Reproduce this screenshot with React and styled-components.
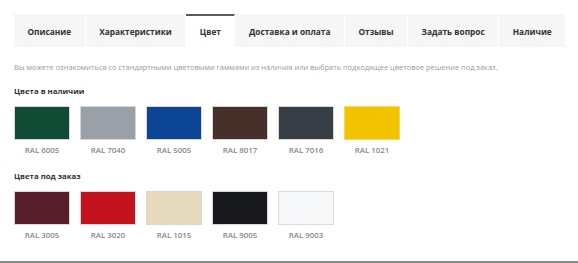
import React, {useState} from "react";
import styled, {createGlobalStyle} from "styled-components";

const GlobalStyle = createGlobalStyle`
    body {
        margin: 0;
        background: #fff;
        font-family: "Open Sans", "Liberation Sans", sans-serif;
    }
`;

const Page = styled.div`
    width: 578px;
    height: 263px;
    box-sizing: border-box;
    padding: 14px 11px 0 14px;
    border-bottom: 2px solid #8a8a8a;
    overflow: hidden;
`;

const TabBar = styled.div`
    display: flex;
    height: 32px;
    border-bottom: 1px solid #f0f0f0;
`;

const Tab = styled.div`
    display: flex;
    align-items: center;
    padding: 0 13.5px;
    font-size: 8.3px;
    font-weight: 700;
    color: #333;
    background: ${p => (p.$active ? "#fff" : "#f6f6f6")};
    border-top: 2px solid ${p => (p.$active ? "#5a5a5a" : "#f6f6f6")};
    border-right: 1px solid #fff;
    margin-bottom: -1px;
    box-sizing: border-box;
    white-space: nowrap;
    cursor: pointer;
`;

const Intro = styled.p`
    margin: 15px 0 0;
    font-size: 7.45px;
    color: #9a9a9a;
`;

const GroupTitle = styled.div`
    margin-top: ${p => p.$top}px;
    font-size: 7.8px;
    font-weight: 700;
    color: #333;
`;

const SwatchRow = styled.div`
    display: flex;
    gap: 10px;
    margin-top: 10px;
`;

const SwatchItem = styled.div`
    display: flex;
    flex-direction: column;
    align-items: center;
    width: 56px;
`;

const Swatch = styled.div`
    width: 56px;
    height: 34px;
    box-sizing: border-box;
    background: ${p => p.$color};
    border: 1px solid ${p => p.$edge || "#d8d8d8"};
`;

const SwatchLabel = styled.div`
    margin-top: 5px;
    font-size: 7.9px;
    font-weight: 600;
    color: #888;
`;

const tabs = [
    "Описание",
    "Характеристики",
    "Цвет",
    "Доставка и оплата",
    "Отзывы",
    "Задать вопрос",
    "Наличие",
];

const inStock = [
    ["RAL 6005", "#0f4a35"],
    ["RAL 7040", "#9aa0a7"],
    ["RAL 5005", "#0d4595"],
    ["RAL 8017", "#442f29"],
    ["RAL 7016", "#373e45"],
    ["RAL 1021", "#f3c200", "#f6d860"],
];

const toOrder = [
    ["RAL 3005", "#5a1e29"],
    ["RAL 3020", "#c2121d"],
    ["RAL 1015", "#e7d9bc"],
    ["RAL 9005", "#17181c"],
    ["RAL 9003", "#f7f8fa", "#dcdcdc"],
];

function Colors({items}) {
    return (
        <SwatchRow>
            {items.map(([name, color, edge]) => (
                <SwatchItem key={name}>
                    <Swatch $color={color} $edge={edge} />
                    <SwatchLabel>{name}</SwatchLabel>
                </SwatchItem>
            ))}
        </SwatchRow>
    );
}

export default function App() {
    const [active, setActive] = useState("Цвет");

    return (
        <Page>
            <GlobalStyle />
            <TabBar>
                {tabs.map(name => (
                    <Tab key={name} $active={name === active} onClick={() => setActive(name)}>
                        {name}
                    </Tab>
                ))}
            </TabBar>
            <Intro>
                Вы можете ознакомиться со стандартными цветовыми гаммами из наличия или выбрать подходящее цветовое решение под заказ.
            </Intro>
            <GroupTitle $top={14}>Цвета в наличии</GroupTitle>
            <Colors items={inStock} />
            <GroupTitle $top={16}>Цвета под заказ</GroupTitle>
            <Colors items={toOrder} />
        </Page>
    );
}
